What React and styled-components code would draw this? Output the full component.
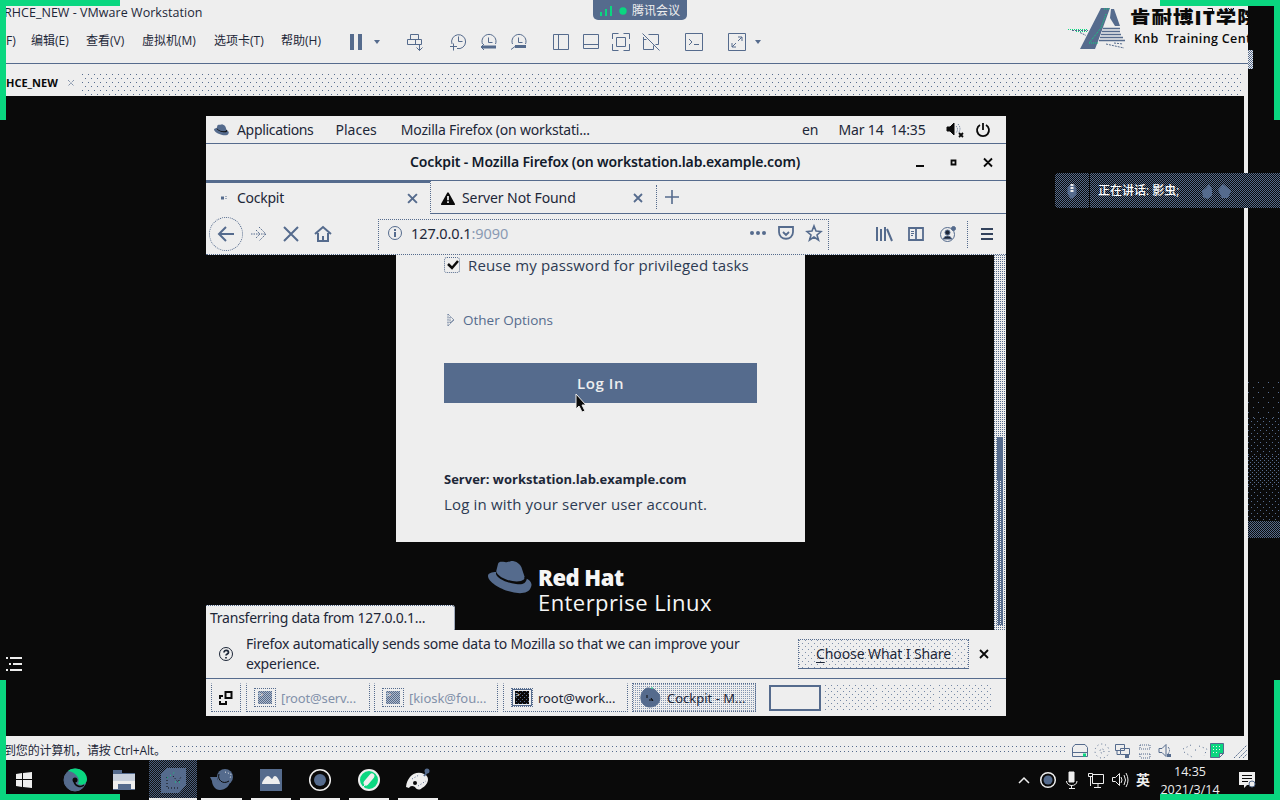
import React from "react";
import styled, { createGlobalStyle, css } from "styled-components";

const C = { ink: "#0a0a0a", paper: "#eeeeee", slate: "#556b8d", green: "#0ad780", text: "#1d2738" };
const gnome = `"Noto Sans", "Open Sans", sans-serif`;
const win = `"Open Sans", "Noto Sans CJK SC", sans-serif`;

const dots = (color, size, base = "transparent") => css`
  background-color: ${base};
  background-image: conic-gradient(at 1px 1px, transparent 75%, ${color} 0),
    conic-gradient(at 1px 1px, transparent 75%, ${color} 0);
  background-size: ${size}px ${size}px;
  background-position: 0 0, ${size / 2}px ${size / 2}px;
`;
const grid = (color, size, base = "transparent") => css`
  background-color: ${base};
  background-image: conic-gradient(at 1px 1px, transparent 75%, ${color} 0);
  background-size: ${size}px ${size}px;
`;

const Global = createGlobalStyle`
  * { box-sizing: border-box; }
  body { margin: 0; background: ${C.ink}; overflow: hidden; }
`;

const Screen = styled.div`
  position: relative;
  width: 1280px;
  height: 800px;
  display: flex;
  flex-direction: column;
  overflow: hidden;
  background: ${C.ink};
  color: ${C.text};
  font-family: ${win};
`;
const Main = styled.div`display: flex; height: 760px;`;
const VmWindow = styled.div`
  width: 1248px;
  display: flex;
  flex-direction: column;
  background: ${C.paper};
`;
const SideStrip = styled.div`
  width: 32px;
  display: flex;
  flex-direction: column;
  padding-top: 50px;
`;
const StripPatch = styled.div`width: 5px; height: 19px; ${dots(C.slate, 2, C.paper)}`;
const StripFade = styled.div`
  margin-top: ${(p) => p.$mt}px;
  height: ${(p) => p.$h}px;
  ${(p) => dots(C.slate, p.$size)}
`;

const Label = styled.span`
  font-size: ${(p) => p.$size || 14}px;
  font-weight: ${(p) => p.$weight || 400};
  letter-spacing: ${(p) => p.$ls || 0}px;
  margin-left: ${(p) => p.$ml || 0}px;
  color: ${(p) => p.$color || "inherit"};
  line-height: ${(p) => p.$lh || 20}px;
  white-space: pre;
`;
const Icon = styled.svg`
  flex: none;
  display: block;
  overflow: visible;
  width: ${(p) => p.$w || 20}px;
  height: ${(p) => p.$h || 20}px;
  margin-left: ${(p) => (p.$push ? "auto" : `${p.$ml || 0}px`)};
  margin-right: ${(p) => p.$mr || 0}px;
  fill: ${(p) => p.$fill || "none"};
  stroke: ${(p) => p.$c || C.slate};
  stroke-width: ${(p) => p.$sw || 1};
`;

/* ---------- VMware chrome ---------- */
const TitleRow = styled.div`height: 26px; display: flex; padding: 3px 0 0 4px;`;
const MenuRow = styled.div`
  height: 38px;
  display: flex;
  align-items: flex-start;
  padding-top: 6px;
  border-bottom: 1px solid ${C.slate};
`;
const MenuItem = styled.div`
  width: ${(p) => p.$w}px;
  padding-left: ${(p) => p.$pl || 0}px;
  font-size: 12px;
  line-height: 18px;
  white-space: nowrap;
`;
const TabRow = styled.div`height: 32px; display: flex; padding-left: 6px; align-items: stretch;`;
const VmTab = styled.div`
  width: 76px;
  display: flex;
  align-items: center;
  padding-top: 5px;
`;
const TabFill = styled.div`
  flex: 1;
  margin: 7px 5px 0 0;
  ${dots(C.slate, 8)}
  background-size: 6px 8px;
  background-position: 0 3px, 3px 7px;
`;
const Workspace = styled.div`
  height: 640px;
  background: ${C.ink};
  border-right: 4px solid ${C.paper};
  padding: 20px 0 0 206px;
`;
const StatusRow = styled.div`height: 24px; display: flex; align-items: center; padding: 5px 0 0 4px;`;
const StatusFill = styled.div`
  flex: 1;
  height: 6px;
  margin: 0 4px 3px 6px;
  background-image: conic-gradient(at 1px 1px, transparent 75%, ${C.slate} 0);
  background-size: 4px 5px;
`;

/* ---------- Guest desktop ---------- */
const Guest = styled.div`
  width: 800px;
  height: 600px;
  display: flex;
  flex-direction: column;
  background: ${C.paper};
  font-family: ${gnome};
`;
const GnomeBar = styled.div`height: 28px; display: flex; align-items: center; border-bottom: 1px solid ${C.slate}; padding-left: 8px;`;
const FfTitle = styled.div`height: 37px; display: flex; align-items: center; padding-left: 204px; border-bottom: 1px solid ${C.slate};`;
const FfTabs = styled.div`height: 33px; display: flex;`;
const FfTab = styled.div`
  width: ${(p) => p.$w}px;
  display: flex;
  align-items: center;
  padding-top: ${(p) => (p.$active ? 0 : 2)}px;
  padding-bottom: ${(p) => (p.$active ? 1 : 0)}px;
  border-top: ${(p) => (p.$active ? `2px solid ${C.slate}` : "0")};
  border-right: ${(p) => (p.$active ? `1px dotted ${C.slate}` : "0")};
  border-bottom: ${(p) => (p.$active ? "0" : `1px solid ${C.slate}`)};
`;
const NewTab = styled.div`
  flex: 1;
  display: flex;
  align-items: center;
  border-bottom: 1px solid ${C.slate};
  &::before { content: ""; height: 24px; border-left: 1px dotted ${C.slate}; }
`;
const NavRow = styled.div`height: 41px; display: flex; align-items: center; border-bottom: 1px dotted ${C.slate}; padding-left: 3px;`;
const BackButton = styled.div`
  width: 34px;
  height: 34px;
  border: 1px dotted ${C.slate};
  border-radius: 50%;
  display: flex;
  align-items: center;
  justify-content: center;
`;
const UrlBar = styled.div`
  width: 451px;
  height: 31px;
  margin-left: 47px;
  padding-bottom: 3px;
  display: flex;
  align-items: center;
  border: 1px dotted ${C.slate};
  border-bottom: 0;
`;
const NavDivider = styled.div`height: 27px; margin-left: 11px; border-left: 1px dotted ${C.slate};`;
const Page = styled.div`position: relative; height: 375px; display: flex; background: ${C.ink};`;
const PageBody = styled.div`width: 788px; display: flex; flex-direction: column;`;
const Card = styled.div`
  width: 409px;
  height: 287px;
  margin-left: 190px;
  padding-left: 48px;
  background: ${C.paper};
  font-family: "Open Sans", sans-serif;
`;
const CardRow = styled.div`display: flex; align-items: center; height: 19px; margin-top: ${(p) => p.$mt || 0}px;`;
const CheckBox = styled.div`
  width: 16px;
  height: 16px;
  border: 1px dotted ${C.slate};
  border-radius: 3px;
`;
const LoginButton = styled.div`
  width: 313px;
  height: 40px;
  margin-top: 34px;
  display: flex;
  align-items: center;
  justify-content: center;
  background: ${C.slate};
  color: ${C.paper};
`;
const Brand = styled.div`display: flex; margin: 19px 0 0 282px; color: #f6f6f6;`;
const BrandText = styled.div`display: flex; flex-direction: column; margin: 4px 0 0 6px; font-family: "Open Sans", sans-serif;`;
const ScrollTrack = styled.div`
  width: 12px;
  height: 375px;
  padding: 182px 3px 0 3px;
  ${grid(C.slate, 2, C.paper)}
`;
const ScrollThumb = styled.div`
  height: 188px;
  background: linear-gradient(${C.slate} 43px, transparent 43px),
    conic-gradient(at 1px 1px, transparent 75%, ${C.paper} 0) 0 0 / 3px 2px ${C.slate};
`;
const LoadTip = styled.div`
  position: absolute;
  left: 0;
  bottom: 0;
  width: 249px;
  height: 25px;
  display: flex;
  padding: 2px 0 0 4px;
  background: ${C.paper};
  border-top: 1px dotted ${C.slate};
  border-right: 1px dotted ${C.slate};
  border-top-right-radius: 3px;
`;
const Notice = styled.div`height: 49px; display: flex; align-items: center; padding-left: 13px; border-bottom: 1px solid ${C.slate};`;
const NoticeText = styled.div`width: 565px; flex: none; display: flex; flex-direction: column; padding-left: 13px;`;
const ShareButton = styled.div`
  width: 171px;
  height: 30px;
  flex: none;
  display: flex;
  align-items: center;
  justify-content: center;
  border: 1px dotted ${C.slate};
  border-bottom: 1px solid ${C.slate};
  u { text-underline-offset: 3px; }
  ${dots("#7f90ab", 6)}
`;
const PanelRow = styled.div`height: 37px; display: flex; align-items: center; padding-left: 5px;`;
const PanelTask = styled.div`
  width: ${(p) => p.$w}px;
  height: 29px;
  margin-left: ${(p) => p.$ml || 0}px;
  display: flex;
  align-items: center;
  border: 1px dotted ${C.slate};
  border-top-color: ${(p) => (p.$active ? C.slate : "transparent")};
  padding-left: ${(p) => p.$pl ?? 7}px;
  ${(p) => p.$active && grid("#8294b0", 2, C.paper)}
`;
const TermIcon = styled.div`
  width: 22px;
  height: 19px;
  padding: 2px 3px;
  border: 1px dotted ${C.slate};
  outline: 1px solid ${(p) => (p.$dark ? C.slate : C.paper)};
  outline-offset: -2px;
  background-clip: content-box;
  ${(p) => (p.$dark ? dots(C.slate, 4, C.ink) : dots(C.slate, 2, "#aeb8c8"))}
  color: ${C.paper};
  font: 8px/8px "Liberation Mono", monospace;
`;
const Desk = styled.div`
  width: ${(p) => (p.$on ? 52 : 54)}px;
  height: 26px;
  margin-left: ${(p) => p.$ml}px;
  ${(p) => (p.$on ? `border: 2px solid ${C.slate};` : dots("#7488a6", 6))}
`;

/* ---------- Windows taskbar ---------- */
const Taskbar = styled.div`height: 40px; display: flex; color: ${C.paper};`;
const TaskCell = styled.div`
  width: ${(p) => p.$w || 49}px;
  padding-right: ${(p) => p.$pr || 0}px;
  display: flex;
  align-items: center;
  justify-content: center;
  position: relative;
  ${(p) => p.$active && dots("#111", 2, "#4a5f80")}
  &::after {
    content: "";
    display: ${(p) => (p.$run ? "block" : "none")};
    position: absolute;
    bottom: 0;
    left: ${(p) => (p.$active ? 0 : 4)}px;
    right: ${(p) => (p.$active ? 0 : 5)}px;
    height: 2px;
    background: ${C.paper};
  }
`;
const Tray = styled.div`flex: 1; display: flex; align-items: center; padding-left: 575px;`;
const Clock = styled.div`width: 70px; margin-left: 5px; padding-top: 1px; display: flex; flex-direction: column; align-items: center;`;

/* ---------- Overlays ---------- */
const Corner = styled.div`
  position: absolute;
  width: 120px;
  height: 120px;
  border: 0 solid ${C.green};
  ${(p) => p.$v}: 0;
  ${(p) => p.$h}: 0;
  border-${(p) => p.$v}-width: 6px;
  border-${(p) => p.$h}-width: 6px;
`;
const MeetingBadge = styled.div`
  position: absolute;
  left: 593px;
  top: 0;
  width: 94px;
  height: 20px;
  display: flex;
  align-items: center;
  padding: 2px 0 0 7px;
  background: ${C.slate};
  border-radius: 0 0 5px 5px;
  color: ${C.paper};
`;
const Speaking = styled.div`
  position: absolute;
  left: 1055px;
  top: 173px;
  width: 225px;
  height: 35px;
  display: flex;
  align-items: center;
  border-radius: 4px 0 0 4px;
  color: #fff;
  ${dots(C.slate, 2, C.ink)}
`;
const SpeakMic = styled.div`width: 35px; height: 35px; display: flex; align-items: center; justify-content: center; border-right: 1px solid ${C.ink};`;
const School = styled.div`
  position: absolute;
  left: 1068px;
  top: 6px;
  width: 186px;
  height: 46px;
  display: flex;
  overflow: hidden;
  color: ${C.ink};
`;
const SchoolText = styled.div`display: flex; flex-direction: column; margin-left: 1px;`;
const SchoolName = styled.div`width: 118px; overflow: hidden; display: flex;`;
const WindowMarks = styled.div`position: absolute; left: 1200px; top: 6px;`;
const ListMark = styled.div`position: absolute; left: 6px; top: 656px;`;
const Pointer = styled.div`position: absolute; left: 575px; top: 393px;`;

const Hat = ({ w, h, ml, band }) => (
  <Icon $w={w} $h={h} $ml={ml} $c="none" viewBox="0 0 44 33">
    <path fill={C.slate} d="M10 3C11 0 14 1 17 1C20 2 22-.5 25 0C30 1 33 4 34 8L37 17C41 18 45 22 43 26C41 33 31 33 24 31C13 29 0 21 0 15C0 12 4 11 8 11Z" />
    <path fill={band} d="M8 10C10 17 24 22 33 20C36 19 37 18 36 16L39 17C38 23 34 24 28 23C18 22 9 17 8 13Z" />
  </Icon>
);
const Cross = ({ s = 10, ml, c, sw = 1.8 }) => (
  <Icon $w={s} $h={s} $ml={ml} $c={c} $sw={sw} viewBox="0 0 10 10"><path d="M1 1L9 9M9 1L1 9" /></Icon>
);
const Caret = ({ ml }) => (
  <Icon $w={10} $ml={ml} $c="none" $fill={C.slate}><path d="M2 8h6L5 12z" /></Icon>
);

function VmToolbar() {
  return (
    <>
      <Icon $ml={17} $c="none" $fill={C.slate}><path d="M2 2h4v16H2zM10 2h4v16h-4z" /></Icon>
      <Caret ml={4} />
      <Icon $ml={23}><path d="M5.500 7.500v-5h8v5M2.500 7.500h14v5h-14zM10.500 7.500v5M14.500 12.500v6M11.500 15.500l3 3 3-3" /></Icon>
      <Icon $ml={23}><path d="M4 12A7 7 0 1 1 9 16.500M10.500 4.500v5h4M5.500 11.500v7M2 14.500h7" /></Icon>
      <Icon $ml={11}><path d="M3.500 12A7 7 0 1 1 16.500 12M9.500 5.500v5h4" /><path strokeWidth="3" d="M3 15h14" /><path d="M5 12l-3 3 3 3" /></Icon>
      <Icon $ml={10}><path d="M3.500 12A7 7 0 1 1 16.500 12M9.500 5.500v5h4M2 17.500l4-3" /><path strokeWidth="3" d="M6 14.500h11" /></Icon>
      <Icon $ml={22}><path d="M2.500 2.500h15v15h-15zM7.500 2.500v15" /></Icon>
      <Icon $ml={10}><path d="M2.500 2.500h15v14h-15zM2.500 12.500h15" /></Icon>
      <Icon $ml={10}><path d="M1.500 7v-5.500h6M12.500 1.500h6v5.500M18.500 12v6.500h-6M7.500 18.500h-6v-6.500M5.500 5.500h9v9h-9z" /></Icon>
      <Icon $ml={10}><path d="M1.500 1.500l17 17M2.500 5v12.500h10v-4M7.500 2.500h10v10h-3M5.500 7.500h-3" /></Icon>
      <Icon $ml={23}><path d="M1.500 1.500h17v17h-17zM5 7l3 3-3 3M10 12.500h5" /></Icon>
      <Icon $ml={23}><path d="M1.500 1.500h17v17h-17zM11 5h4v4M15 5l-4 4M9 15h-4v-4M5 15l4-4" /></Icon>
      <Caret ml={6} />
    </>
  );
}

function Firefox() {
  return (
    <>
      <FfTitle>
        <Label $size={14} $weight={600} $ls={-0.14} $color="#111a2b">Cockpit - Mozilla Firefox (on workstation.lab.example.com)</Label>
        <Icon $push $w={90} $c={C.ink} $sw={1.8}>
          <path d="M0 14h8M35.500 8.500h4v4h-4zM68 6.500l8 8M76 6.500l-8 8" />
        </Icon>
      </FfTitle>
      <FfTabs>
        <FfTab $w={225} $active>
          <Icon $w={6} $h={6} $ml={15}><path strokeWidth="3" d="M0 3h3" /><path d="M5 1v4" strokeDasharray="1 1" /></Icon>
          <Label $ml={10} $size={14} $ls={-0.25}>Cockpit</Label>
          <Cross ml={123} s={11} />
        </FfTab>
        <FfTab $w={225}>
          <Icon $w={14} $h={15} $ml={10} viewBox="0 0 16 16"><path fill={C.ink} stroke={C.ink} d="M8 2L15 14.500H1Z" strokeLinejoin="round" strokeWidth="2" /><path stroke={C.paper} strokeWidth="2" d="M8 5v5M8 11v2" /></Icon>
          <Label $ml={7} $size={14} $ls={-0.1}>Server Not Found</Label>
          <Cross ml={57} s={10} />
        </FfTab>
        <NewTab><Icon $w={14} $h={14} $ml={8} $sw={1.6}><path d="M7 0v14M0 7h14" /></Icon></NewTab>
      </FfTabs>
      <NavRow>
        <BackButton><Icon $w={16} $h={16} $sw={2}><path d="M1 8h15M8 1L1 8l7 7" /></Icon></BackButton>
        <Icon $w={16} $h={16} $ml={8}><path strokeDasharray="1.500 1" d="M0 8h15M8 1l7 7-7 7M5 4l4 4-4 4" /></Icon>
        <Icon $w={14} $h={14} $ml={17} $sw={2}><path d="M0 0l14 14M14 0L0 14" /></Icon>
        <Icon $w={16} $h={16} $ml={17} $sw={2}><path d="M0 8l8-7 8 7M3 7v8h10V7M8 10v5" /></Icon>
        <UrlBar>
          <Icon $w={14} $h={14} $ml={9}><circle cx="7" cy="7" r="6.500" /><path strokeWidth="2" d="M7 6v5M7 3v2" /></Icon>
          <Label $ml={9} $size={14.5} $ls={-0.1}>127.0.0.1</Label>
          <Label $size={14.5} $ls={-0.1} $color="#8a9ab3">:9090</Label>
          <Icon $push $w={16} $h={16} $c="none" $fill={C.slate}><circle cx="2" cy="8" r="2" /><circle cx="8" cy="8" r="2" /><circle cx="14" cy="8" r="2" /></Icon>
          <Icon $w={16} $h={16} $ml={12} $sw={1.8}><path d="M1 2h14v5c0 9-14 9-14 0zM5 7l3 3 3-3" /></Icon>
          <Icon $w={16} $h={16} $ml={12} $mr={6} $sw={1.6}><path d="M8 1l2 5 5 .5-4 3.500 1.500 5L8 12l-4.500 3L5 10 1 6.500 6 6z" /></Icon>
        </UrlBar>
        <Icon $w={16} $h={16} $ml={47} $sw={2}><path d="M1 1v14M5 3v12M9 1v14M11 3l5 12" /></Icon>
        <Icon $w={16} $h={16} $ml={16} $sw={1.8}><path d="M1 2h14v12H1zM8 2v12" /><path strokeWidth="1" d="M3 5.500h3M3 7.500h3M3 9.500h2" /></Icon>
        <Icon $w={16} $h={16} $ml={16}><circle cx="7.500" cy="8.500" r="7" /><circle cx="7.500" cy="6.500" r="2.500" fill={C.text} /><path fill={C.text} d="M3 13c2-4 7-4 9 0z" /><circle cx="13.500" cy="2.500" r="2" fill={C.slate} /></Icon>
        <NavDivider />
        <Icon $w={12} $h={14} $ml={13} $c="#33435d" $sw={2}><path d="M0 2h12M0 7h12M0 12h12" /></Icon>
      </NavRow>
    </>
  );
}

function GuestDesktop() {
  return (
    <Guest>
      <GnomeBar>
        <Hat w={15} h={12} band={C.ink} />
        <Label $ml={8} $size={14} $ls={-0.33}>Applications</Label>
        <Label $ml={22} $size={14}>Places</Label>
        <Label $ml={24} $size={14} $ls={-0.2}>Mozilla Firefox (on workstati...</Label>
        <Label $ml={212} $size={14}>en</Label>
        <Label $ml={20} $size={14} $ls={-0.15}>{"Mar 14  14:35"}</Label>
        <Icon $w={17} $h={15} $ml={21} $c={C.ink}><path fill={C.ink} d="M0 5h3l4-4v12l-4-4H0z" /><path stroke={C.slate} strokeDasharray="1 1" d="M9 4q3 3 0 7M11 2q4 5 0 9" /><path strokeWidth="1.800" d="M12 11l4 4M16 11l-4 4" /></Icon>
        <Icon $w={14} $h={14} $ml={12} $c={C.ink} $sw={1.8}><path d="M4 2A6 6 0 1 0 10 2M7 0v7" /></Icon>
      </GnomeBar>
      <Firefox />
      <Page>
        <PageBody>
          <Card>
            <CardRow>
              <CheckBox><Icon $w={14} $h={14} $c={C.ink} $sw={2.5}><path d="M3 6l4 4 6-7" /></Icon></CheckBox>
              <Label $ml={8} $size={15} $ls={0.14} $color="#2d3b53">Reuse my password for privileged tasks</Label>
            </CardRow>
            <CardRow $mt={36}>
              <Icon $w={8} $h={12} $ml={3}><path strokeDasharray="1 .6" d="M1 0v12L7 6zM3 3v6l3-3" /></Icon>
              <Label $ml={8} $size={13.5} $color={C.slate}>Other Options</Label>
            </CardRow>
            <LoginButton><Label $size={15} $weight={600} $ls={0.6}>Log In</Label></LoginButton>
            <CardRow $mt={66}><Label $size={13} $weight={700}>Server: workstation.lab.example.com</Label></CardRow>
            <CardRow $mt={6}><Label $size={15} $ls={0.16} $color="#2d3b53">Log in with your server user account.</Label></CardRow>
          </Card>
          <Brand>
            <Hat w={44} h={33} band={C.ink} />
            <BrandText>
              <Label $size={22} $weight={800} $lh={25} $ls={-0.5}>Red Hat</Label>
              <Label $size={22} $weight={500} $lh={25} $ls={0.43}>Enterprise Linux</Label>
            </BrandText>
          </Brand>
        </PageBody>
        <ScrollTrack><ScrollThumb /></ScrollTrack>
        <LoadTip><Label $size={14} $ls={-0.24}>Transferring data from 127.0.0.1...</Label></LoadTip>
      </Page>
      <Notice>
        <Icon $w={14} $h={14} $c={C.text}><circle cx="7" cy="7" r="6.500" /><path strokeWidth="1.700" d="M5 5.500c0-3 4.500-2.500 4.500 0C9.500 7 7 7 7 8.500M7 10v1.500" /></Icon>
        <NoticeText>
          <Label $size={14} $ls={-0.2}>Firefox automatically sends some data to Mozilla so that we can improve your</Label>
          <Label $size={14} $ls={-0.2}>experience.</Label>
        </NoticeText>
        <ShareButton><Label $size={14} $ls={-0.1}><u>C</u>hoose What I Share</Label></ShareButton>
        <Cross ml={10} s={10} c={C.ink} />
      </Notice>
      <PanelRow>
        <PanelTask $w={30}>
          <Icon $w={14} $h={15} $c={C.ink} $sw={2}><path d="M6.500 2h6v6h-6zM4 6H1v3M1 11v3h6v-3" /></Icon>
        </PanelTask>
        <PanelTask $w={124} $ml={5}><TermIcon>&gt;</TermIcon><Label $ml={5} $size={13} $ls={-0.15} $color="#8291aa">[root@serv...</Label></PanelTask>
        <PanelTask $w={124} $ml={4}><TermIcon>&gt;</TermIcon><Label $ml={5} $size={13} $ls={-0.05} $color="#8291aa">[kiosk@fou...</Label></PanelTask>
        <PanelTask $w={125} $ml={5}><TermIcon $dark>&gt;</TermIcon><Label $ml={5} $size={13} $ls={-0.05}>root@work...</Label></PanelTask>
        <PanelTask $w={124} $ml={4} $active>
          <Icon $w={21} $h={21}><path fill={C.slate} d="M4 3C8-1 10 2 13 2C16 2 17 6 19 7C22 14 17 20 10 20C1 20-2 9 4 3Z" /><path stroke={C.ink} d="M7 8v3M9 13h4M11 11l2 3" /><path stroke={C.green} d="M12 0v2" /></Icon>
          <Label $ml={6} $size={13}>Cockpit - M...</Label>
        </PanelTask>
        <Desk $on $ml={13} />
        <Desk $ml={4} /><Desk $ml={3} /><Desk $ml={3} />
      </PanelRow>
    </Guest>
  );
}

function StatusIcons() {
  return (
    <>
      <Icon $w={16} $h={16}><path d="M3 1.500h10l2.500 3v9H.5v-9zM.5 9.500h15" /><path stroke={C.green} strokeWidth="3" d="M11 12h3" /></Icon>
      <Icon $w={16} $h={16} $ml={6}><circle cx="8" cy="8" r="7" strokeDasharray="1 3" /><circle cx="8" cy="8" r="2" strokeDasharray="1 2" /></Icon>
      <Icon $w={16} $h={16} $ml={5}><path d="M.5 1.500h9v6h-9zM5.500 5.500h9v6h-9zM2 7.500v4h3" /><path strokeWidth="3" d="M10 13.500h4" /></Icon>
      <Icon $w={16} $h={16} $ml={6}><path strokeDasharray="1 1" d="M3 2h10M2 6h12M2 11h12M4 15h9M3 2v3M13 2v3M3 11v4M13 11v4" /></Icon>
      <Icon $w={16} $h={16} $ml={5}><path d="M1 5.500h3l4-4v12l-4-4H1z" /><path strokeDasharray="2 1" d="M10 4q3 3 0 7" /><path strokeWidth="3" d="M9 12.500h4" /></Icon>
      <Icon $w={26} $h={16} $ml={8}><path strokeDasharray="1 3" d="M1 6L9 2M2 9l8 5M13 7h2M17 3l8 3-3 7" /></Icon>
      <Icon $w={15} $h={15} $ml={2}><path fill={C.green} d="M.5.500h13v10l-4 4h-9z" /><path fill={C.paper} d="M13.500 10.500h-4v4z" /><path stroke={C.paper} strokeDasharray="1 2" d="M3 3.500h8M3 6.500h8M3 9.500h6" /></Icon>
      <Icon $w={15} $h={16} $ml={8}><path strokeDasharray="2 1" d="M1 15L14 2M6 15l8-8M10 15l4-4" /></Icon>
    </>
  );
}

function WinTaskbar() {
  return (
    <Taskbar>
      <TaskCell $w={50} $pr={2}><Icon $w={16} $h={16} $c="none" $fill={C.paper}><path d="M0 2l6-1v6H0zM7 1l9-1v7H7zM0 8h6v7l-6-1zM7 8h9v8l-9-1z" /></Icon></TaskCell>
      <TaskCell><Icon $w={24} $h={24}><circle cx="12" cy="12" r="11" fill={C.slate} /><path stroke="none" fill={C.green} d="M5 3C13-3 24 3 24 11c0 5-5 7-9 5 3-6-3-12-10-13z" /><circle cx="12" cy="12" r="2.500" fill={C.ink} stroke="none" /><path stroke={C.ink} strokeWidth="1.500" d="M11 13c1 5 6 7 10 4" /></Icon></TaskCell>
      <TaskCell $w={50}><Icon $w={22} $h={20}><path stroke="none" fill={C.slate} d="M0 0h9v3h13v17H0z" /><path stroke="none" fill="#c8d0dc" d="M0 4h22v7H0z" /><path stroke="none" fill={C.paper} d="M0 11h22v8h-4v-5H5v5H0z" /></Icon></TaskCell>
      <TaskCell $w={48} $run $active><Icon $w={25} $h={25}><path stroke="none" fill={C.slate} d="M6 0h19v17l-7 8H0V6z" /><path stroke={C.ink} strokeDasharray="1 2" d="M6 9v11h12M12 8l5 6 3-5" /><path stroke={C.green} strokeDasharray="1 3" d="M6 10l8-6M14 14h6" /></Icon></TaskCell>
      <TaskCell $w={50} $run><Icon $w={24} $h={22}><circle cx="15" cy="8" r="8" fill={C.slate} stroke="none" /><path stroke="none" fill={C.slate} d="M0 8h7c0 6 7 7 12 5 2 3-4 8-9 8C5 21 2 16 2 12z" /><path stroke={C.ink} d="M9 5c-2 6 4 11 10 7" /><path stroke={C.paper} strokeDasharray="1 2" d="M15 3l6 2-1 5" /></Icon></TaskCell>
      <TaskCell $run $pr={2}><Icon $w={22} $h={22} $c="none" viewBox="0 0 22 22"><path fill={C.slate} d="M0 0h22v22H0z" /><path fill={C.paper} d="M2 15c0-3 4-8 6-8s3 3 4 3 1-3 3-3 5 5 5 8z" /></Icon></TaskCell>
      <TaskCell $run $pr={2}><Icon $w={22} $h={22}><circle cx="11" cy="11" r="10.300" stroke={C.paper} strokeWidth="1.500" /><circle cx="11" cy="11" r="6" fill={C.slate} stroke="none" /></Icon></TaskCell>
      <TaskCell $run $pr={2}><Icon $w={22} $h={22}><circle cx="11" cy="11" r="10" fill={C.green} stroke={C.paper} strokeWidth="2" /><path strokeLinecap="round" stroke={C.paper} strokeWidth="5" d="M8 14l6-7" /><path stroke={C.paper} d="M5 18l3-3" /></Icon></TaskCell>
      <TaskCell $run><Icon $w={25} $h={22}><path fill={C.paper} stroke="none" d="M0 18C1 8 9 1 18 5c7 3 4 11-2 14-3 3-6 1-7-1-3-2-5-1-6 1z" /><circle cx="9" cy="14" r="2" fill={C.ink} stroke="none" /><path stroke={C.slate} strokeWidth="2" d="M18 7l4-5" /><path stroke={C.slate} strokeDasharray="1 2" d="M6 10l7-4M12 17l8-5" /><circle cx="21" cy="2" r="2.500" fill={C.slate} stroke="none" /></Icon></TaskCell>
      <Tray>
        <Icon $w={12} $h={8} $c={C.paper} $sw={1.5}><path d="M1 7l5-5 5 5" /></Icon>
        <Icon $w={16} $h={16} $ml={10} $c={C.paper} $sw={1.5}><circle cx="8" cy="8" r="7.300" /><circle cx="8" cy="8" r="4.500" fill={C.slate} stroke="none" /></Icon>
        <Icon $w={12} $h={17} $ml={10} $c={C.paper}><path fill={C.paper} d="M3 0h5v10H3z" /><path d="M.5 9c0 6 10.500 6 10.500 0M5.500 13v3M3 16.500h6" /></Icon>
        <Icon $w={16} $h={16} $ml={10} $c={C.paper}><path d="M4.500 2.500h11v9h-11zM10 11.500v4M6 15.500h7M.500 1.500h4v3h-4zM2.500 5v9" /></Icon>
        <Icon $w={17} $h={16} $ml={8} $c={C.paper}><path d="M.5 5.500h3l4-4v12l-4-4h-3zM9 5q2 3 0 6M12 3q3 5 0 10M14 1q4 7 0 14" /></Icon>
        <Label $ml={7} $size={14} $weight={600}>英</Label>
        <Clock><Label $size={12.5} $lh={18}>14:35</Label><Label $size={12.5} $lh={18}>2021/3/14</Label></Clock>
        <Icon $w={16} $h={16} $ml={14} $c="none"><path fill={C.paper} d="M0 0h16v13H8l-3 3v-3H0z" /><path stroke={C.ink} strokeWidth="1.200" d="M3 3.500h10M3 6.500h10M3 9.500h6" /><circle cx="13" cy="12" r="3" fill={C.paper} stroke={C.slate} /></Icon>
      </Tray>
    </Taskbar>
  );
}

export default function App() {
  return (
    <Screen>
      <Global />
      <Main>
        <VmWindow>
          <TitleRow><Label $size={12.5} $ls={0.04}>RHCE_NEW - VMware Workstation</Label></TitleRow>
          <MenuRow>
            <MenuItem $w={31} $pl={6}>F)</MenuItem>
            <MenuItem $w={55}>编辑(E)</MenuItem>
            <MenuItem $w={56}>查看(V)</MenuItem>
            <MenuItem $w={72}>虚拟机(M)</MenuItem>
            <MenuItem $w={67}>选项卡(T)</MenuItem>
            <MenuItem $w={50}>帮助(H)</MenuItem>
            <VmToolbar />
          </MenuRow>
          <TabRow>
            <VmTab>
              <Label $size={11} $weight={700} $color={C.ink}>HCE_NEW</Label>
              <Icon $w={6} $h={6} $ml={10}><path strokeDasharray="1 1" d="M0 0l6 6M6 0L0 6" /></Icon>
            </VmTab>
            <TabFill />
          </TabRow>
          <Workspace><GuestDesktop /></Workspace>
          <StatusRow>
            <Label $size={12} $ls={-0.15}>到您的计算机，请按 Ctrl+Alt。</Label>
            <StatusFill />
            <StatusIcons />
          </StatusRow>
        </VmWindow>
        <SideStrip>
          <StripPatch />
          <StripFade $mt={313} $h={36} $size={10} />
          <StripFade $h={38} $size={6} />
          <StripFade $h={30} $size={4} />
          <StripFade $h={35} $size={6} />
          <StripFade $h={17} $size={2} />
        </SideStrip>
      </Main>
      <WinTaskbar />

      <School>
        <Icon $w={61} $h={46}>
          <path stroke="none" fill={C.slate} d="M33 2h9L29 38l-2 5H12zM43 3h3l6 17h-5l-5-8z" />
          <path d="M35 22.500h17M34 25.500h18M33 28.500h20M32 31.500h23M31 34.500h26" strokeWidth="1.500" />
          <path stroke={C.green} strokeDasharray="1 1" d="M0 23.500h19M8 25.500h11M36 3h6M38 8l-5 14-12 15h10" />
          <path d="M4 24.500h16M12 26.500l6 3M38 38l18 4M46 37l9 1" strokeDasharray="2 1" />
        </Icon>
        <SchoolText>
          <SchoolName><Label $size={20.5} $weight={800} $ls={1} $lh={25}>肯耐博IT学院</Label></SchoolName>
          <Label $size={12.5} $weight={600} $ls={0.35} $ml={4} $lh={27}>Knb  Training Cent</Label>
        </SchoolText>
      </School>
      <WindowMarks><Icon $w={40} $h={12} $c={C.ink}><path d="M7.500 2.500h5v5M28 2l6 6M34 2l-6 6" /></Icon></WindowMarks>
      <MeetingBadge>
        <Icon $w={12} $h={10} $c={C.green} $sw={2}><path d="M1 6v4M6 3v7M11 0v10" /></Icon>
        <Icon $w={8} $h={8} $ml={7} $c="none" $fill={C.green}><circle cx="4" cy="4" r="3.700" /></Icon>
        <Label $ml={5} $size={12} $lh={18}>腾讯会议</Label>
      </MeetingBadge>
      <Speaking>
        <SpeakMic><Icon $w={10} $h={16}><path fill={C.slate} d="M1 5l2-3h4l2 3v6l-3 4H4l-3-4z" /><path stroke={C.paper} strokeWidth="3" strokeDasharray="2 1" d="M5 1v8" /></Icon></SpeakMic>
        <Label $ml={8} $size={12} $weight={500}>正在讲话: 影虫;</Label>
        <Icon $w={34} $h={18} $ml={22}><path fill={C.slate} stroke="none" d="M1 9l4-3 3-4 3 5v7l-5 3-4-2zM17 8l5-6 8 7-3 7h-6z" /></Icon>
      </Speaking>
      <ListMark><Icon $w={16} $h={16} $c={C.paper} $sw={2}><path d="M0 2h2M4 2h12M3 8h2M7 8h9M0 14h2M4 14h12" /></Icon></ListMark>
      <Pointer><Icon $w={12} $h={20} $c={C.paper}><path fill={C.ink} d="M1 1v15l3-3 3 6 3-1-3-6h4z" /></Icon></Pointer>
      <Corner $v="top" $h="left" />
      <Corner $v="top" $h="right" />
      <Corner $v="bottom" $h="left" />
      <Corner $v="bottom" $h="right" />
    </Screen>
  );
}
